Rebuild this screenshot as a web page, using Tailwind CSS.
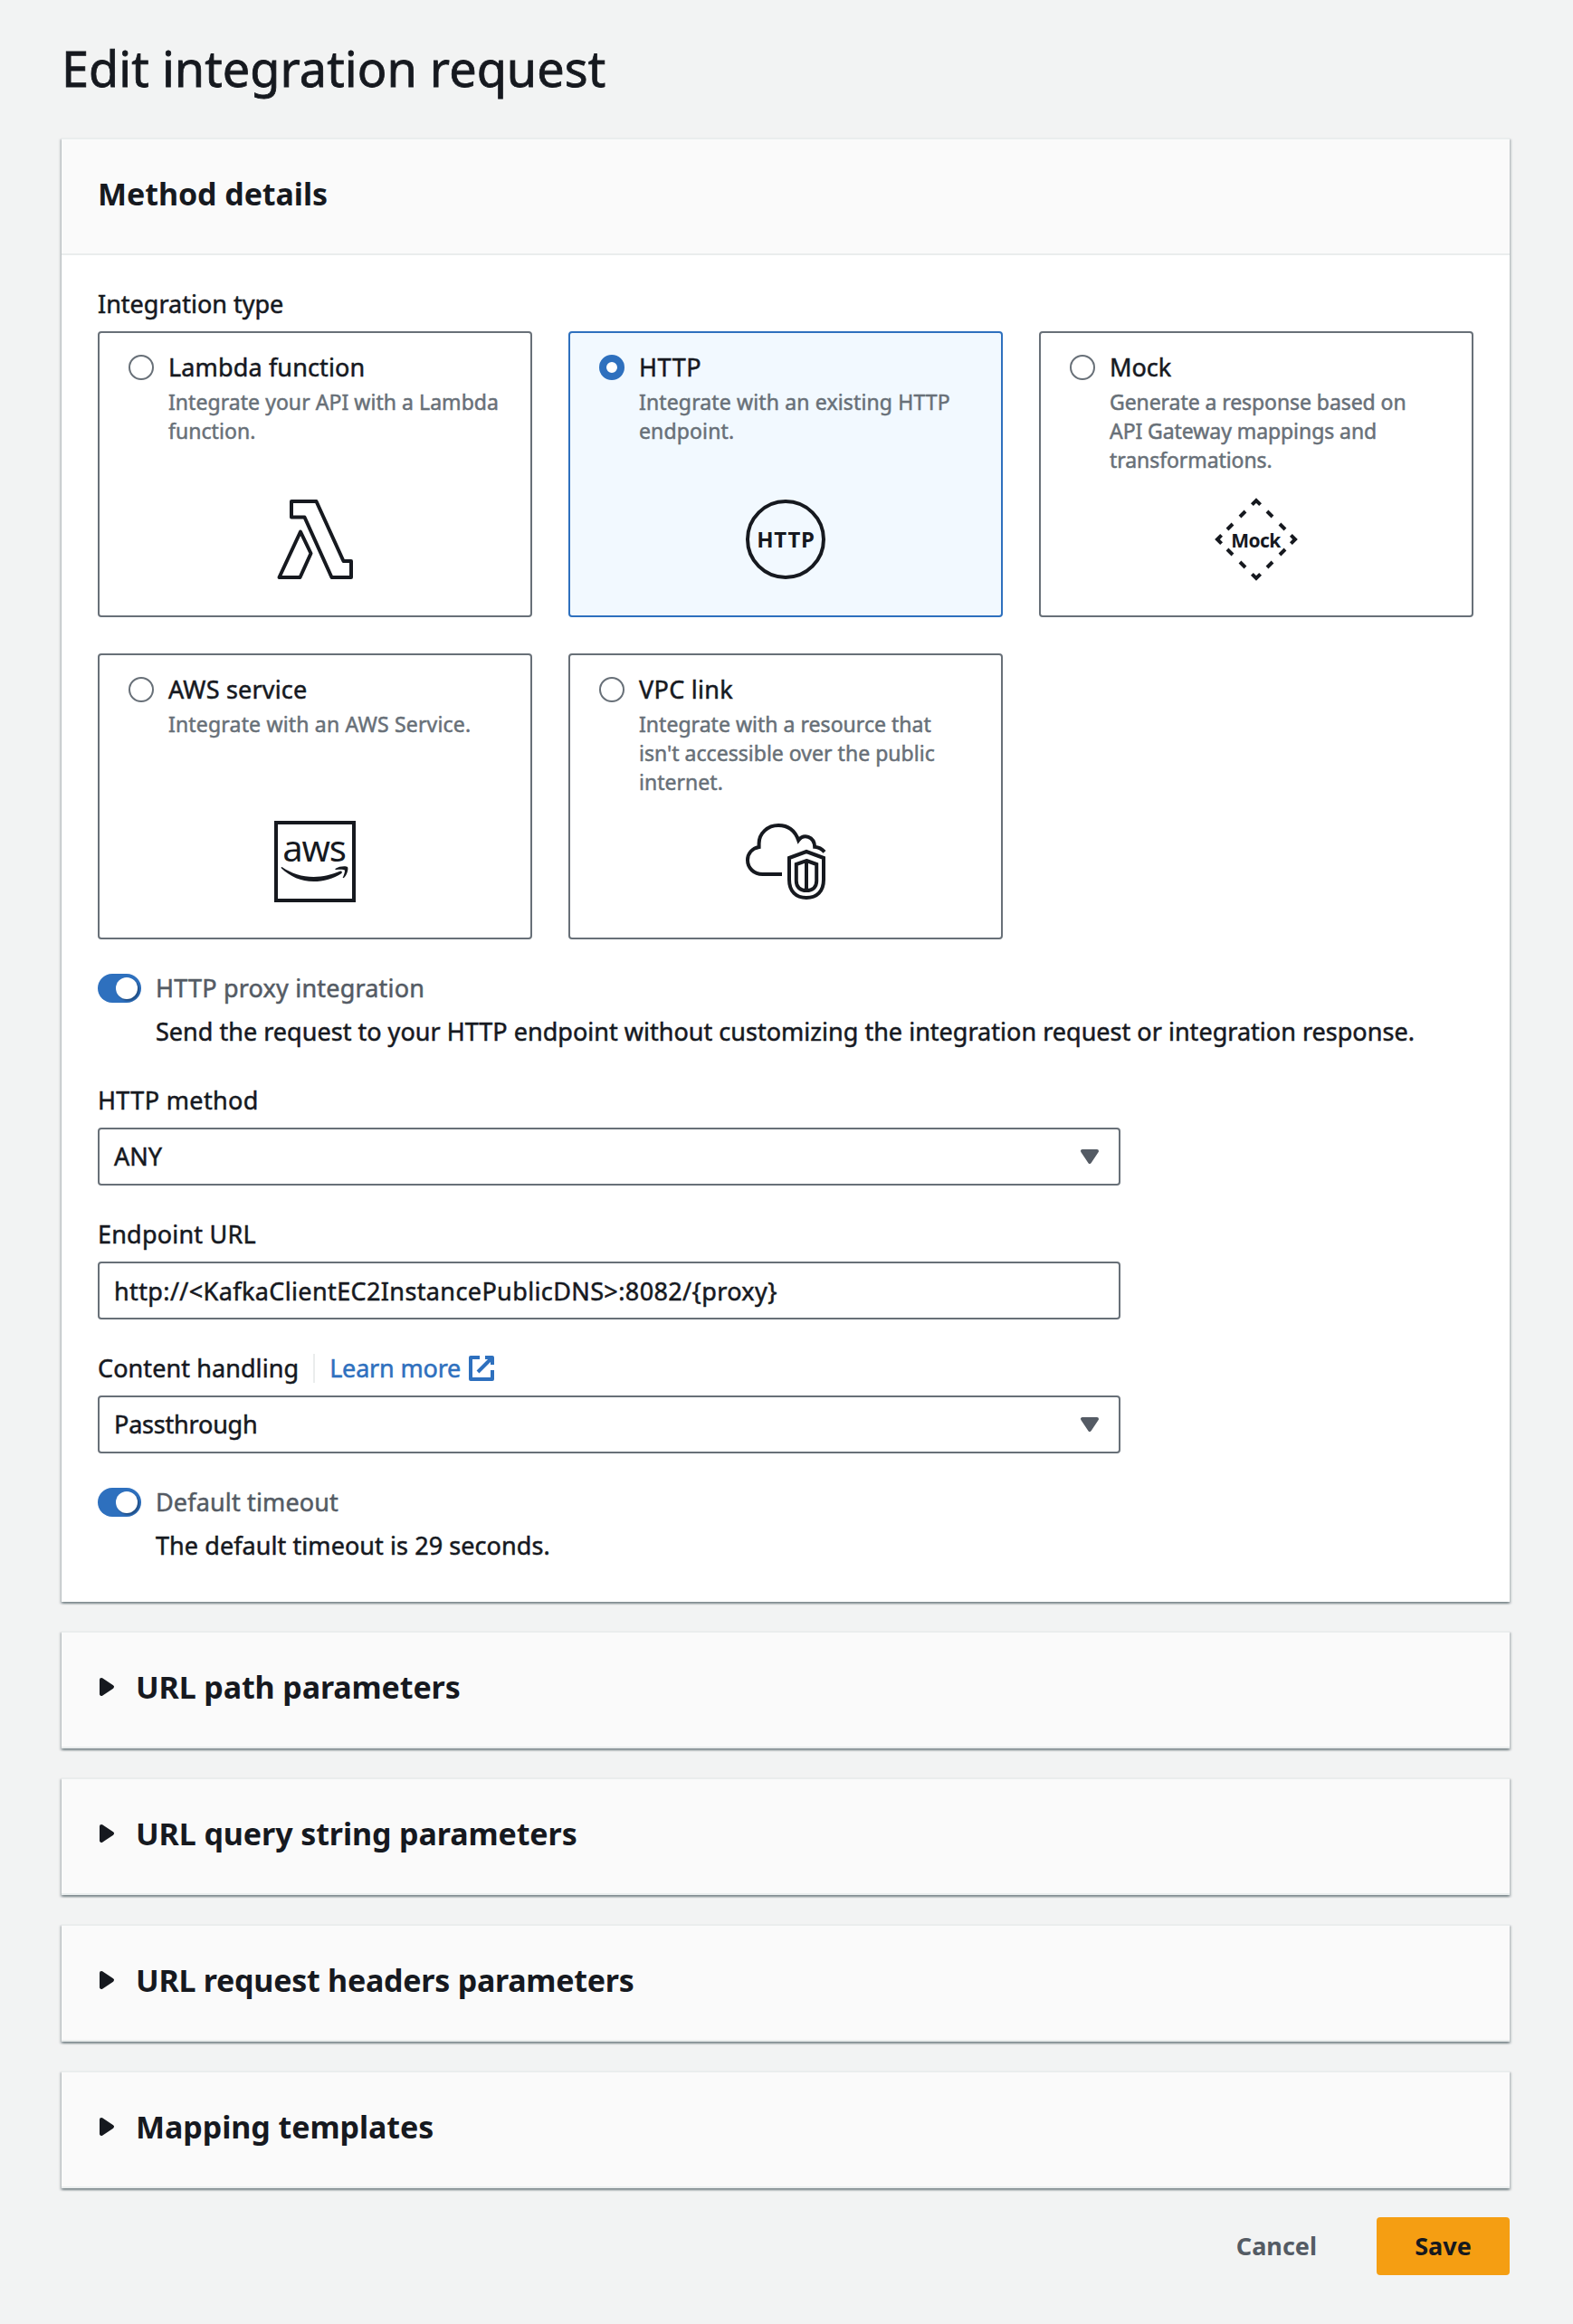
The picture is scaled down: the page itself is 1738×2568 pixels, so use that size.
<!DOCTYPE html>
<html lang="en">
<head>
<meta charset="utf-8">
<title>Edit integration request</title>
<script src="https://cdn.jsdelivr.net/npm/@tailwindcss/browser@4"></script>
</head>
<body class="min-h-screen bg-[#f2f3f3] pr-[70px] pl-[68px] font-['Noto_Sans',sans-serif] text-[27px] leading-8 text-[#16191f] [-webkit-text-stroke:0.5px]">
<h1 class="pt-[39px] pb-[41px] text-[54px] leading-[72px] tracking-[0.04px] [-webkit-text-stroke:0.8px]">Edit integration request</h1>

<main class="flex flex-col gap-8">
  <section class="border-t-2 border-[#eaeded] bg-white shadow-[0_2px_2px_rgba(0,28,36,0.3),2px_2px_2px_rgba(0,28,36,0.15),-2px_2px_2px_rgba(0,28,36,0.15)]">
    <header class="h-32 border-b-2 border-[#eaeded] bg-[#fafafa] px-10 pt-[38px]">
      <h2 class="text-[34px] leading-11 font-bold tracking-[-0.08px] [-webkit-text-stroke:0]">Method details</h2>
    </header>
    <div class="px-10 pt-[38px] pb-[46px]">
      <div>Integration type</div>
      <div class="mt-[14px] grid grid-cols-3 gap-10">
        <div class="flex h-[316px] flex-col rounded border-2 border-[#687078] px-8 pt-6 pb-9">
          <div class="flex gap-4">
            <span class="size-7 shrink-0 rounded-full border-2 border-[#687078] bg-white"></span>
            <div>
              <div class="leading-7 tracking-[0.14px]">Lambda function</div>
              <p class="mt-2 text-[23px] leading-8 tracking-[0.05px] text-[#687078]">Integrate your API with a Lambda<br>function.</p>
            </div>
          </div>
          <svg class="mx-auto mt-auto size-24" viewBox="0 0 96 96" fill="none" stroke="#16191f" stroke-width="4" stroke-linejoin="round">
            <path d="M22 6H49.500L79.500 72H88V90H66.500L36.500 23.500H22Z"/>
            <path d="M32 39.500L43.500 63.500L31.500 90H8.500Z"/>
          </svg>
        </div>
        <div class="flex h-[316px] flex-col rounded border-2 border-[#2e70be] bg-[#f2f9ff] px-8 pt-6 pb-9">
          <div class="flex gap-4">
            <span class="size-7 shrink-0 rounded-full border-8 border-[#2e70be] bg-white"></span>
            <div>
              <div class="leading-7 tracking-[0.6px]">HTTP</div>
              <p class="mt-2 text-[23px] leading-8 tracking-[0.14px] text-[#687078]">Integrate with an existing HTTP<br>endpoint.</p>
            </div>
          </div>
          <svg class="mx-auto mt-auto size-24" viewBox="0 0 96 96" fill="none" stroke="#16191f" stroke-width="4">
            <circle cx="48" cy="48" r="42"/>
            <text x="48.5" y="57.4" text-anchor="middle" fill="#16191f" stroke="none" class="text-[24px] font-bold tracking-[0.8px] [-webkit-text-stroke:0]">HTTP</text>
          </svg>
        </div>
        <div class="flex h-[316px] flex-col rounded border-2 border-[#687078] px-8 pt-6 pb-9">
          <div class="flex gap-4">
            <span class="size-7 shrink-0 rounded-full border-2 border-[#687078] bg-white"></span>
            <div>
              <div class="leading-7">Mock</div>
              <p class="mt-2 text-[23px] leading-8 tracking-[-0.07px] text-[#687078]">Generate a response based on<br>API Gateway mappings and<br>transformations.</p>
            </div>
          </div>
          <svg class="mx-auto mt-auto size-24" viewBox="0 0 96 96" fill="none" stroke="#16191f" stroke-width="4">
            <path d="M43.400 9.600L48 5L52.600 9.600M86.400 43.400L91 48L86.400 52.600M52.600 86.400L48 91L43.400 86.400M9.600 52.600L5 48L9.600 43.400"/>
            <path d="M60 17L66 23M74 31L80 37M80 59L74 65M66 73L60 79M36 79L30 73M22 65L16 59M16 37L22 31M30 23L36 17"/>
            <text x="47.5" y="56.6" text-anchor="middle" fill="#16191f" stroke="none" class="text-[21px] font-bold tracking-[-0.6px] [-webkit-text-stroke:0]">Mock</text>
          </svg>
        </div>
        <div class="flex h-[316px] flex-col rounded border-2 border-[#687078] px-8 pt-6 pb-9">
          <div class="flex gap-4">
            <span class="size-7 shrink-0 rounded-full border-2 border-[#687078] bg-white"></span>
            <div>
              <div class="leading-7 tracking-[0.19px]">AWS service</div>
              <p class="mt-2 text-[23px] leading-8 tracking-[0.18px] text-[#687078]">Integrate with an AWS Service.</p>
            </div>
          </div>
          <svg class="mx-auto mt-auto size-24" viewBox="0 0 96 96" fill="none" stroke="#16191f" stroke-width="4">
            <path d="M5 5H91V91H5Z"/>
            <text x="47" y="47.8" text-anchor="middle" fill="#16191f" stroke="none" class="text-[40px] tracking-[-1.2px] [-webkit-text-stroke:0.8px]">aws</text>
            <path stroke="none" fill="#16191f" d="M11.8 54.2C22 61 34 65 46.500 65C57 65 66.500 62.500 75.500 58.800C77.500 58 78.800 60 77.200 61.200C68.500 67 57.500 70 46.500 70C32.500 70 20.500 64.500 11 55.500C10.300 54.500 11 53.700 11.800 54.200Z"/>
            <path stroke="none" fill="#16191f" d="M70.800 55.700C74.500 53 82.500 52.600 84 54C85.300 55.800 83.500 63 80.200 65.800C79.300 66.500 78.500 66 79 65.200C80 63 81.500 58.800 80.800 57.600C80 56.400 75 56.600 71.500 57C70.200 57.100 70 56.300 70.800 55.700Z"/>
          </svg>
        </div>
        <div class="flex h-[316px] flex-col rounded border-2 border-[#687078] px-8 pt-6 pb-9">
          <div class="flex gap-4">
            <span class="size-7 shrink-0 rounded-full border-2 border-[#687078] bg-white"></span>
            <div>
              <div class="leading-7 tracking-[0.3px]">VPC link</div>
              <p class="mt-2 text-[23px] leading-8 tracking-[0.03px] text-[#687078]">Integrate with a resource that<br>isn't accessible over the public<br>internet.</p>
            </div>
          </div>
          <svg class="mx-auto mt-auto size-24" viewBox="0 0 96 96" fill="none" stroke="#16191f" stroke-width="4">
            <path d="M44 62H22.500C13 62 6 55 6 46.500C6 39 11 33.500 18.600 32V28C18.600 17 28 8 40 8C51 8 58.500 14 62.200 24.500C68 17 79.500 20 80.200 31.800C84.500 32.200 88 34 91 37.300"/>
            <path d="M71 37L90 44V68C90 81 82.500 88 71 88S52 81 52 68V44Z"/>
            <path d="M71 47L82.200 51V69.500C82.200 76 78 80 71 80S59.800 76 59.800 69.500V51ZM71 47V80"/>
          </svg>
        </div>
      </div>

      <div class="mt-[38px] flex gap-4">
        <span class="flex h-8 w-12 justify-end rounded-full bg-[#2e70be] p-1"><span class="size-6 rounded-full bg-white shadow-[2px_2px_2px_rgba(0,0,0,0.3)]"></span></span>
        <div>
          <div class="tracking-[0.2px] text-[#545b64]">HTTP proxy integration</div>
          <div class="mt-4 tracking-[0.02px]">Send the request to your HTTP endpoint without customizing the integration request or integration response.</div>
        </div>
      </div>

      <div class="mt-11 tracking-[0.36px]">HTTP method</div>
      <div class="mt-[14px] flex h-16 w-[1130px] items-center justify-between rounded border-2 border-[#687078] px-4">
        <span>ANY</span>
        <svg class="size-8" viewBox="0 0 16 16" fill="#545b64" stroke="#545b64" stroke-width="2" stroke-linejoin="round"><path d="M4 5h8l-4 6z"/></svg>
      </div>

      <div class="mt-[38px] tracking-[0.2px]">Endpoint URL</div>
      <div class="mt-[14px] flex h-16 w-[1130px] items-center rounded border-2 border-[#687078] px-4 pt-0.5 tracking-[0.38px]">http://&lt;KafkaClientEC2InstancePublicDNS&gt;:8082/{proxy}</div>

      <div class="mt-[38px] flex">
        <span class="tracking-[0.08px]">Content handling</span>
        <span class="ml-4 flex h-8 border-l-2 border-[#eaeded] pl-4 text-[#2e70be]">
          <span class="tracking-[-0.18px]">Learn more</span>
          <svg class="ml-[7px] size-8" viewBox="0 0 16 16" fill="none" stroke="currentColor" stroke-width="2" stroke-linejoin="round"><path d="M10 2h4v4M6 10l8-8M14 9.048V14H2V2h5"/></svg>
        </span>
      </div>
      <div class="mt-[14px] flex h-16 w-[1130px] items-center justify-between rounded border-2 border-[#687078] px-4">
        <span class="tracking-[-0.2px]">Passthrough</span>
        <svg class="size-8" viewBox="0 0 16 16" fill="#545b64" stroke="#545b64" stroke-width="2" stroke-linejoin="round"><path d="M4 5h8l-4 6z"/></svg>
      </div>

      <div class="mt-[38px] flex gap-4">
        <span class="flex h-8 w-12 justify-end rounded-full bg-[#2e70be] p-1"><span class="size-6 rounded-full bg-white shadow-[2px_2px_2px_rgba(0,0,0,0.3)]"></span></span>
        <div>
          <div class="tracking-[0.15px] text-[#545b64]">Default timeout</div>
          <div class="mt-4 tracking-[0.07px]">The default timeout is 29 seconds.</div>
        </div>
      </div>
    </div>
  </section>

  <section class="flex h-[130px] gap-4 border-t-2 border-b-2 border-[#eaeded] bg-[#fafafa] pt-[38px] pl-[34px] shadow-[0_2px_2px_rgba(0,28,36,0.3),2px_2px_2px_rgba(0,28,36,0.15),-2px_2px_2px_rgba(0,28,36,0.15)]">
    <svg class="mt-1.5 size-8" viewBox="0 0 16 16" fill="#16191f" stroke="#16191f" stroke-width="2" stroke-linejoin="round"><path d="M5 4l6 4-6 4z"/></svg>
    <h2 class="text-[34px] leading-11 font-bold tracking-[-0.12px] [-webkit-text-stroke:0]">URL path parameters</h2>
  </section>
  <section class="flex h-[130px] gap-4 border-t-2 border-b-2 border-[#eaeded] bg-[#fafafa] pt-[38px] pl-[34px] shadow-[0_2px_2px_rgba(0,28,36,0.3),2px_2px_2px_rgba(0,28,36,0.15),-2px_2px_2px_rgba(0,28,36,0.15)]">
    <svg class="mt-1.5 size-8" viewBox="0 0 16 16" fill="#16191f" stroke="#16191f" stroke-width="2" stroke-linejoin="round"><path d="M5 4l6 4-6 4z"/></svg>
    <h2 class="text-[34px] leading-11 font-bold tracking-[-0.1px] [-webkit-text-stroke:0]">URL query string parameters</h2>
  </section>
  <section class="flex h-[130px] gap-4 border-t-2 border-b-2 border-[#eaeded] bg-[#fafafa] pt-[38px] pl-[34px] shadow-[0_2px_2px_rgba(0,28,36,0.3),2px_2px_2px_rgba(0,28,36,0.15),-2px_2px_2px_rgba(0,28,36,0.15)]">
    <svg class="mt-1.5 size-8" viewBox="0 0 16 16" fill="#16191f" stroke="#16191f" stroke-width="2" stroke-linejoin="round"><path d="M5 4l6 4-6 4z"/></svg>
    <h2 class="text-[34px] leading-11 font-bold tracking-[-0.26px] [-webkit-text-stroke:0]">URL request headers parameters</h2>
  </section>
  <section class="flex h-[130px] gap-4 border-t-2 border-b-2 border-[#eaeded] bg-[#fafafa] pt-[38px] pl-[34px] shadow-[0_2px_2px_rgba(0,28,36,0.3),2px_2px_2px_rgba(0,28,36,0.15),-2px_2px_2px_rgba(0,28,36,0.15)]">
    <svg class="mt-1.5 size-8" viewBox="0 0 16 16" fill="#16191f" stroke="#16191f" stroke-width="2" stroke-linejoin="round"><path d="M5 4l6 4-6 4z"/></svg>
    <h2 class="text-[34px] leading-11 font-bold tracking-[-0.06px] [-webkit-text-stroke:0]">Mapping templates</h2>
  </section>

  <div class="flex justify-end gap-6 font-bold [-webkit-text-stroke:0]">
    <button class="h-16 rounded px-[42px] text-[#545b64]">Cancel</button>
    <button class="h-16 w-[147px] rounded bg-[#f59e12]">Save</button>
  </div>
</main>
</body>
</html>
